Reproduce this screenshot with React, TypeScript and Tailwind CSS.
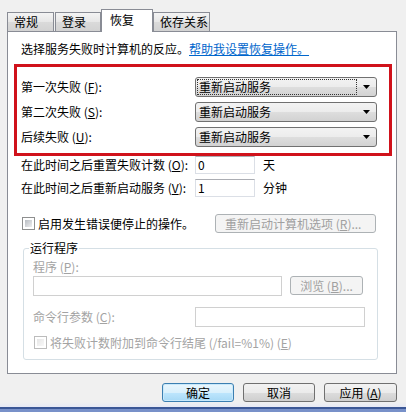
import React from "react";

const U = ({ c }: { c: string }) => <span className="underline">{c}</span>;

function Tab({ w, sel, ml, children }: { w: number; sel?: boolean; ml?: boolean; children: React.ReactNode }) {
  if (sel) {
    return (
      <div
        className="h-[23px] -mb-px relative z-10 flex items-center pl-[8px] pb-[3px] border border-b-0 border-[#898c95] bg-white"
        style={{ width: w }}
      >
        {children}
      </div>
    );
  }
  return (
    <div
      className={
        "h-[19px] flex items-center pl-[6px] border border-b-0 border-[#898c95] bg-[linear-gradient(#f4f4f4,#e6e6e6_50%,#dadada_50%,#d2d2d2)] " +
        (ml ? "ml-px" : "")
      }
      style={{ width: w }}
    >
      {children}
    </div>
  );
}

function Combo({ focus }: { focus?: boolean }) {
  return (
    <div className="w-[182px] h-[20px] rounded-[3px] border border-[#707070] bg-[linear-gradient(#f3f3f3,#ececec_50%,#dedede_50%,#d2d2d2)] flex items-center pl-[1px] pr-[4px]">
      <div
        className={
          "h-[16px] flex-1 flex items-center pl-[1px] " + (focus ? "border border-dotted border-[#333]" : "border border-transparent")
        }
      >
        重新启动服务
      </div>
      <svg width="7" height="4" viewBox="0 0 7 4" className="ml-[6px] mr-[2px]">
        <polygon points="0,0 7,0 3.5,4" fill="#000" />
      </svg>
    </div>
  );
}

function Check({ disabled }: { disabled?: boolean }) {
  return (
    <div
      className={
        "w-[13px] h-[13px] border p-[2px] bg-white " + (disabled ? "border-[#bcbcbc]" : "border-[#8e8f8f]")
      }
    >
      <div
        className={
          "w-full h-full " +
          (disabled
            ? "bg-[linear-gradient(135deg,#e6e6e6,#f8f8f8)]"
            : "bg-[linear-gradient(135deg,#b7bcc2,#eeeeef)]")
        }
      />
    </div>
  );
}

export default function App() {
  return (
    <div className="w-[406px] h-[412px] bg-[#f0f0f0] flex flex-col font-['Noto_Sans_CJK_SC','Noto_Sans',sans-serif] text-[12px] leading-[12px] text-black overflow-hidden">
      <div className="mt-[9px] h-[22px] pl-[7px] flex items-end">
        <Tab w={47}>常规</Tab>
        <Tab w={46} ml>
          登录
        </Tab>
        <Tab w={52} sel>
          恢复
        </Tab>
        <Tab w={57}>依存关系</Tab>
      </div>

      <div className="ml-[7px] w-[390px] h-[343px] border border-[#898c95] bg-white flex flex-col">
        <div className="mt-[11px] ml-[13px] h-[12px] flex items-center">
          <span>选择服务失败时计算机的反应。</span>
          <span className="text-[#0066cc] underline">帮助我设置恢复操作。</span>
        </div>

        <div className="mt-[9px] ml-[6px] w-[378px] h-[92px] border-[3px] border-[#d0121b] pt-[10px] pl-[4px] flex flex-col gap-[5px]">
          <div className="h-[20px] flex items-center">
            <div className="w-[174px]">
              第一次失败 (<U c="F" />):
            </div>
            <Combo focus />
          </div>
          <div className="h-[20px] flex items-center">
            <div className="w-[174px]">
              第二次失败 (<U c="S" />):
            </div>
            <Combo />
          </div>
          <div className="h-[20px] flex items-center">
            <div className="w-[174px]">
              后续失败 (<U c="U" />):
            </div>
            <Combo />
          </div>
        </div>

        <div className="pl-[13px] flex flex-col gap-[5px]">
          <div className="h-[18px] flex items-center">
            <div className="w-[174px]">
              在此时间之后重置失败计数 (<U c="O" />):
            </div>
            <div className="w-[60px] h-[18px] border border-[#dbdfe6] border-t-[#abadb3] flex items-center pl-[2px]">0</div>
            <div className="ml-[8px]">天</div>
          </div>
          <div className="h-[18px] flex items-center">
            <div className="w-[174px]">
              在此时间之后重新启动服务 (<U c="V" />):
            </div>
            <div className="w-[60px] h-[18px] border border-[#dbdfe6] border-t-[#abadb3] flex items-center pl-[2px]">1</div>
            <div className="ml-[8px]">分钟</div>
          </div>
        </div>

        <div className="mt-[17px] h-[19px] pl-[14px] flex items-center">
          <div className="w-[193px] flex items-center">
            <Check />
            <span className="ml-[3px]">启用发生错误便停止的操作。</span>
          </div>
          <div className="w-[161px] h-[19px] rounded-[3px] border border-[#adb2b5] bg-[#f4f4f4] text-[#a0a0a0] flex items-center pl-[9px]">
            重新启动计算机选项 (<U c="R" />)...
          </div>
        </div>

        <fieldset className="mt-[9px] ml-[15px] w-[355px] h-[118px] border border-[#d5dfe5] rounded-[3px] pl-[9px]">
          <legend className="ml-[-4px] px-[1px] leading-[12px]">运行程序</legend>
          <div className="mt-[7px] text-[#a3a3a3]">
            程序 (<U c="P" />):
          </div>
          <div className="mt-[3px] flex items-start">
            <div className="w-[249px] h-[20px] border border-[#d0d0d0] bg-white" />
            <div className="ml-[8px] w-[73px] h-[19px] rounded-[3px] border border-[#adb2b5] bg-[#f4f4f4] text-[#a0a0a0] flex items-center justify-center">
              浏览 (<U c="B" />)...
            </div>
          </div>
          <div className="mt-[11px] h-[20px] flex items-center">
            <div className="w-[162px] text-[#a3a3a3]">
              命令行参数 (<U c="C" />):
            </div>
            <div className="w-[170px] h-[20px] border border-[#d0d0d0] bg-white" />
          </div>
          <div className="mt-[9px] ml-px h-[13px] flex items-center">
            <Check disabled />
            <span className="ml-[3px] text-[#a3a3a3]">
              将失败计数附加到命令行结尾 (/fail=%1%) (<U c="E" />)
            </span>
          </div>
        </fieldset>
      </div>

      <div className="mt-[9px] pr-[9px] flex justify-end gap-[9px]">
        <div className="w-[72px] h-[19px] rounded-[3px] border border-[#3c7fb1] bg-[linear-gradient(#eaf6fd,#d9f0fc_50%,#bee6fd_50%,#a7d9f5)] shadow-[inset_0_0_0_1px_#c9e9fb] flex items-center justify-center">
          确定
        </div>
        <div className="w-[72px] h-[19px] rounded-[3px] border border-[#707070] bg-[linear-gradient(#f2f2f2,#ebebeb_50%,#dddddd_50%,#cfcfcf)] flex items-center justify-center">
          取消
        </div>
        <div className="w-[73px] h-[19px] rounded-[3px] border border-[#707070] bg-[linear-gradient(#f2f2f2,#ebebeb_50%,#dddddd_50%,#cfcfcf)] flex items-center justify-center">
          应用 (<U c="A" />)
        </div>
      </div>

      <div className="mt-auto">
        <div className="h-[5px] bg-[linear-gradient(#f0f0f0,#e6e9f5)]" />
        <div className="h-[2px] bg-[#3b5796]" />
        <div className="h-[3px] bg-[#7891c9]" />
      </div>
    </div>
  );
}
